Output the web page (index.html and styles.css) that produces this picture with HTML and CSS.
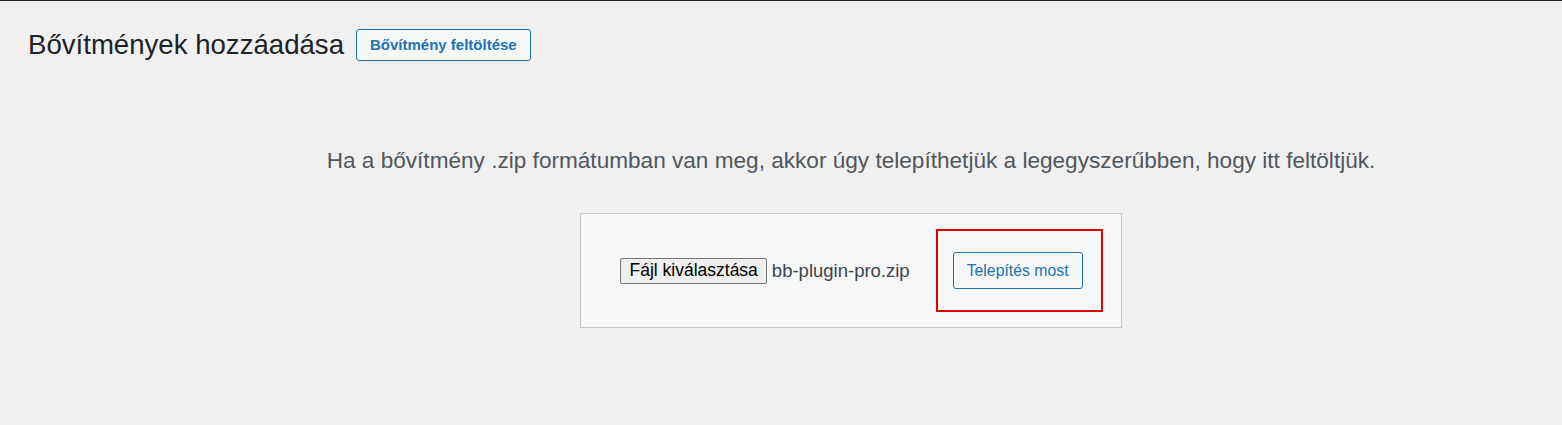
FILE: index.html
```html
<!DOCTYPE html>
<html>

<head>
    <title>Bővítmények hozzáadása</title>
    <link rel="stylesheet" href="styles.css">
</head>

<body>
    <div class="wrap">
        <div class="page-header">
            <h1>Bővítmények hozzáadása</h1>
            <a class="page-title-action" href="#">Bővítmény feltöltése</a>
        </div>
    </div>
    <div class="upload-plugin">
        <p class="install-help">Ha a bővítmény .zip formátumban van meg, akkor úgy telepíthetjük a legegyszerűbben, hogy itt feltöltjük.</p>
        <form class="wp-upload-form">
            <div class="file-field">
                <button type="button" class="file-button">Fájl kiválasztása</button>
                <span class="file-name">bb-plugin-pro.zip</span>
            </div>
            <div class="submit-holder">
                <button type="button" class="install-button">Telepítés most</button>
                <div class="highlight"></div>
            </div>
        </form>
    </div>
</body>

</html>
```

FILE: styles.css
```css
html,
body {
    height: 100%;
    margin: 0;
    padding: 0;
}

body {
    background: #f0f0f1;
    border-top: 1px solid #1d2327;
    font-family: "Liberation Sans", Arial, sans-serif;
    color: #1d2327;
}

.wrap {
    padding: 0 28px;
}

.page-header {
    display: flex;
    align-items: center;
    gap: 12px;
    padding-top: 27px;
}

.page-header h1 {
    margin: 0;
    font-size: 27.6px;
    font-weight: 400;
    line-height: 34px;
}

.page-title-action {
    display: inline-block;
    padding: 0 13px;
    height: 30px;
    line-height: 30px;
    font-size: 15px;
    font-weight: 700;
    color: #2271b1;
    background: #f6f7f7;
    border: 1px solid #2271b1;
    border-radius: 3px;
    text-decoration: none;
}

.upload-plugin {
    padding-left: 140px;
    text-align: center;
}

.install-help {
    margin: 0;
    padding-top: 84px;
    font-size: 22.6px;
    line-height: 30px;
    color: #50575e;
}

.wp-upload-form {
    display: inline-flex;
    align-items: center;
    gap: 43px;
    margin-top: 37px;
    padding: 38px 38px 38px 39px;
    background: #f6f7f7;
    border: 1px solid #c3c4c7;
}

.file-field {
    display: flex;
    align-items: center;
    gap: 5px;
}

.file-button {
    height: 26px;
    padding: 0 8px;
    font-family: "Liberation Sans", Arial, sans-serif;
    font-size: 17.5px;
    color: #000;
    background: #efefef;
    border: 1px solid #767676;
    border-radius: 2px;
}

.file-name {
    font-size: 18.5px;
    color: #3c434a;
}

.submit-holder {
    position: relative;
}

.install-button {
    height: 37px;
    padding: 0 13px;
    font-family: "Liberation Sans", Arial, sans-serif;
    font-size: 15.8px;
    color: #2271b1;
    background: #f6f7f7;
    border: 1px solid #2271b1;
    border-radius: 3px;
}

.highlight {
    position: absolute;
    top: -23px;
    left: -17px;
    right: -20px;
    bottom: -23px;
    border: 2px solid #e50000;
}
```
